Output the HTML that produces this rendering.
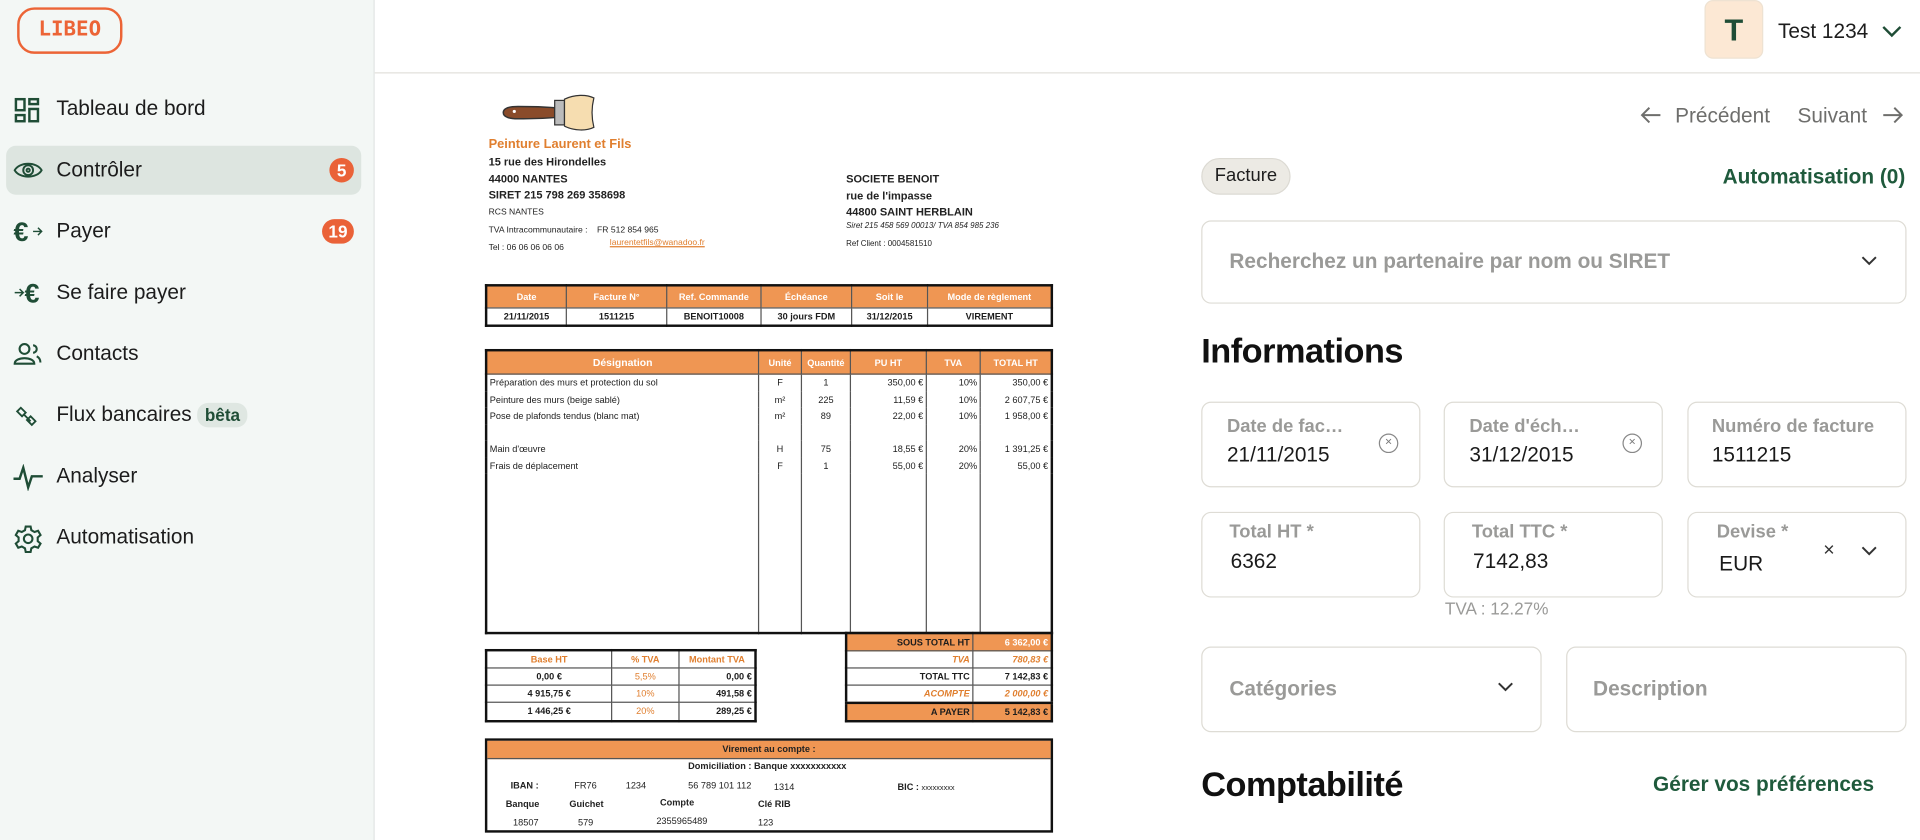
<!DOCTYPE html>
<html><head><meta charset="utf-8"><style>
html,body{margin:0;padding:0;width:1920px;height:840px;overflow:hidden;background:#fff}
#w{position:absolute;left:0;top:0;width:1568px;height:686px;transform:scale(1.22449);transform-origin:0 0;font-family:"Liberation Sans",sans-serif;color:#1d1d1d}
.a{position:absolute}
.sb{left:0;top:0;width:305px;height:686px;background:#f3f7f5;border-right:1px solid #e3e6e4}
.nav{position:absolute;left:46px;font-size:17px;line-height:20px;color:#1c1c1c}
.ic{position:absolute;left:11px}
.badge{position:absolute;background:#ea6238;color:#fff;font-size:14px;font-weight:bold;text-align:center;line-height:20px;height:20px;border-radius:10px}
.box{position:absolute;border:1px solid #dedcd5;border-radius:8px;background:#fff}
.lbl{position:absolute;font-size:15px;font-weight:bold;color:#9a9a98;white-space:nowrap}
.val{position:absolute;font-size:17px;color:#1a1a1a}
.ph{position:absolute;font-size:17px;font-weight:bold;color:#9a9a98}
.h{position:absolute;font-size:28px;font-weight:bold;color:#111;letter-spacing:-0.4px}
.inv{font-family:"Liberation Sans",sans-serif;font-size:7.5px;color:#222}
table{border-collapse:collapse;position:absolute}
td{border:1px solid #555;padding:0 2px;font-size:7.5px;height:13px;white-space:nowrap}
.oh td{background:#ef9653;color:#fff;font-weight:bold;text-align:center}
.thick{border:2px solid #111}
.r{text-align:right}.c{text-align:center}
</style></head><body><div id="w">
<div class="a sb"></div>
<div class="a" style="left:14px;top:6px;width:86px;height:38px;border:2.5px solid #ec6436;border-radius:14px;box-sizing:border-box;color:#ec6436;font-family:'DejaVu Sans Mono','Liberation Mono',monospace;font-weight:bold;font-size:17px;text-align:center;line-height:33px;letter-spacing:0px">LIBEO</div>
<div class="a" style="left:5px;top:119px;width:290px;height:40px;background:#dde5e0;border-radius:8px"></div>
<svg class="ic" style="top:79px" width="22" height="22" viewBox="0 0 22 22" fill="none" stroke="#1f4d36" stroke-width="2"><rect x="2" y="2" width="7" height="9"/><rect x="13" y="2" width="7" height="4"/><rect x="2" y="15" width="7" height="5"/><rect x="13" y="10" width="7" height="10"/></svg>
<div class="nav" style="top:79px">Tableau de bord</div>
<svg class="ic" style="top:129px" width="24" height="20" viewBox="0 0 24 20" fill="none" stroke="#1f4d36" stroke-width="1.6"><path d="M1 10C5 3 19 3 23 10C19 17 5 17 1 10Z"/><circle cx="12" cy="10" r="4"/><circle cx="12" cy="10" r="1.3"/></svg>
<div class="nav" style="top:129px">Contrôler</div>
<div class="badge" style="left:269px;top:129px;width:20px">5</div>
<svg class="ic" style="top:178px" width="26" height="22" viewBox="0 0 26 22"><text x="0" y="19" font-family="Liberation Sans" font-weight="bold" font-size="22" fill="#1f4d36">€</text><path d="M16 11h7M20 8l3 3-3 3" fill="none" stroke="#1f4d36" stroke-width="1.2"/></svg>
<div class="nav" style="top:179px">Payer</div>
<div class="badge" style="left:263px;top:179px;width:26px">19</div>
<svg class="ic" style="top:228px" width="28" height="22" viewBox="0 0 28 22"><path d="M1 11h7M5 8l3 3-3 3" fill="none" stroke="#1f4d36" stroke-width="1.2"/><text x="9" y="19" font-family="Liberation Sans" font-weight="bold" font-size="22" fill="#1f4d36">€</text></svg>
<div class="nav" style="top:229px">Se faire payer</div>
<svg class="ic" style="top:279px" width="24" height="20" viewBox="0 0 24 20" fill="none" stroke="#1f4d36" stroke-width="1.7"><circle cx="9" cy="6" r="4"/><path d="M1 18C1 12 17 12 17 18Z"/><path d="M16 3a3 3 0 0 1 0 6M19 12c2 1 3 3 3 5"/></svg>
<div class="nav" style="top:279px">Contacts</div>
<svg class="ic" style="top:330px" width="24" height="20" viewBox="0 0 24 20" fill="none" stroke="#1f4d36" stroke-width="1.5"><path d="M6 3l4 4-3 3-4-4zM14 10l4 4-3 3-4-4zM9 9l5 5"/></svg>
<div class="nav" style="top:329px">Flux bancaires <span style="background:#dfe7e2;color:#1f4d36;font-weight:bold;font-size:14px;padding:2px 6px;border-radius:9px">bêta</span></div>
<svg class="ic" style="top:379px" width="24" height="22" viewBox="0 0 24 22" fill="none" stroke="#1f4d36" stroke-width="2"><path d="M0 12h5l3-9 4 16 3-9h9"/></svg>
<div class="nav" style="top:379px">Analyser</div>
<svg class="ic" style="top:428px" width="24" height="24" viewBox="0 0 24 24" fill="none" stroke="#1f4d36" stroke-width="1.7"><circle cx="12" cy="12" r="3.5"/><path d="M10 2h4l.6 3 2.6 1.5 2.9-1 2 3.4-2.3 2v3l2.3 2-2 3.4-2.9-1-2.6 1.5-.6 3h-4l-.6-3-2.6-1.5-2.9 1-2-3.4 2.3-2v-3l-2.3-2 2-3.4 2.9 1L9.4 5z"/></svg>
<div class="nav" style="top:429px">Automatisation</div>

<div class="a" style="left:306px;top:59px;width:1262px;height:1px;background:#e2e1dc"></div>
<div class="a" style="left:1392px;top:0;width:48px;height:48px;background:#fce8d4;border-radius:7px;border:1px solid #eee2d2;box-sizing:border-box;color:#1f4d36;font-weight:bold;font-size:25px;text-align:center;line-height:48px">T</div>
<div class="a" style="left:1452px;top:16px;font-size:17px">Test 1234</div>
<svg class="a" style="left:1537px;top:21px" width="16" height="10" viewBox="0 0 16 10" fill="none" stroke="#1f4d36" stroke-width="2"><path d="M1 1l7 7 7-7"/></svg>
<svg class="a" style="left:1339px;top:87px" width="18" height="14" viewBox="0 0 18 14" fill="none" stroke="#6e6e6c" stroke-width="1.6"><path d="M17 7H2M8 1L2 7l6 6"/></svg>
<div class="a" style="left:1368px;top:85px;font-size:17px;color:#6e6e6c">Précédent</div>
<div class="a" style="left:1468px;top:85px;font-size:17px;color:#6e6e6c">Suivant</div>
<svg class="a" style="left:1537px;top:87px" width="18" height="14" viewBox="0 0 18 14" fill="none" stroke="#6e6e6c" stroke-width="1.6"><path d="M1 7h15M10 1l6 6-6 6"/></svg>

<div class="a" style="left:981px;top:129px;width:73px;height:30px;box-sizing:border-box;background:#eceae4;border:1px solid #dcdad3;border-radius:15px;font-size:15px;text-align:center;line-height:28px">Facture</div>
<div class="a" style="right:12px;top:135px;font-size:17px;font-weight:bold;color:#1f5a3c">Automatisation (0)</div>
<div class="box" style="left:981px;top:180px;width:574px;height:66px"></div>
<div class="ph" style="left:1004px;top:204px">Recherchez un partenaire par nom ou SIRET</div>
<svg class="a" style="left:1520px;top:209px" width="13" height="8" viewBox="0 0 13 8" fill="none" stroke="#333" stroke-width="1.6"><path d="M1 1l5.5 5.5L12 1"/></svg>
<div class="h" style="left:981px;top:271px">Informations</div>

<div class="box" style="left:981px;top:328px;width:177px;height:68px"></div>
<div class="lbl" style="left:1002px;top:340px">Date de fac…</div><div class="val" style="left:1002px;top:362px">21/11/2015</div>
<div class="a" style="left:1126px;top:354px;width:14px;height:14px;border:1.4px solid #888;border-radius:50%;font-size:10px;color:#777;text-align:center;line-height:13px">×</div>
<div class="box" style="left:1179px;top:328px;width:177px;height:68px"></div>
<div class="lbl" style="left:1200px;top:340px">Date d'éch…</div><div class="val" style="left:1200px;top:362px">31/12/2015</div>
<div class="a" style="left:1325px;top:354px;width:14px;height:14px;border:1.4px solid #888;border-radius:50%;font-size:10px;color:#777;text-align:center;line-height:13px">×</div>
<div class="box" style="left:1378px;top:328px;width:177px;height:68px"></div>
<div class="lbl" style="left:1398px;top:340px">Numéro de facture</div><div class="val" style="left:1398px;top:362px">1511215</div>

<div class="box" style="left:981px;top:418px;width:177px;height:68px"></div>
<div class="lbl" style="left:1004px;top:426px">Total HT *</div><div class="val" style="left:1005px;top:449px">6362</div>
<div class="box" style="left:1179px;top:418px;width:177px;height:68px"></div>
<div class="lbl" style="left:1202px;top:426px">Total TTC *</div><div class="val" style="left:1203px;top:449px">7142,83</div>
<div class="box" style="left:1378px;top:418px;width:177px;height:68px"></div>
<div class="lbl" style="left:1402px;top:426px">Devise *</div><div class="val" style="left:1404px;top:451px">EUR</div>
<div class="a" style="left:1489px;top:441px;font-size:16px;color:#333">×</div>
<svg class="a" style="left:1520px;top:446px" width="13" height="8" viewBox="0 0 13 8" fill="none" stroke="#333" stroke-width="1.6"><path d="M1 1l5.5 5.5L12 1"/></svg>
<div class="a" style="left:1180px;top:489px;font-size:14px;color:#9a9a98">TVA : 12.27%</div>

<div class="box" style="left:981px;top:528px;width:276px;height:68px"></div>
<div class="ph" style="left:1004px;top:553px">Catégories</div>
<svg class="a" style="left:1223px;top:557px" width="13" height="8" viewBox="0 0 13 8" fill="none" stroke="#333" stroke-width="1.6"><path d="M1 1l5.5 5.5L12 1"/></svg>
<div class="box" style="left:1279px;top:528px;width:276px;height:68px"></div>
<div class="ph" style="left:1301px;top:553px">Description</div>
<div class="h" style="left:981px;top:625px">Comptabilité</div>
<div class="a" style="left:1350px;top:631px;font-size:17px;font-weight:bold;color:#1f5a3c">Gérer vos préférences</div>

<!-- invoice -->
<svg class="a" style="left:409px;top:76px" width="78" height="32" viewBox="0 0 78 32"><path d="M2 16c0-4 6-5 12-5 8 0 18 0 30 1v8c-12 1-22 1-30 1-6 0-12-1-12-5z" fill="#8a4b2a" stroke="#333" stroke-width="1.2"/><circle cx="11" cy="15" r="1.3" fill="#fff"/><rect x="44" y="6" width="8" height="20" fill="#bbb" stroke="#333"/><path d="M52 5c8-4 18-4 24-1-2 8-2 16 0 24-6 3-16 3-24-1z" fill="#f6ddb0" stroke="#333"/></svg>
<div class="a inv" style="left:399px;top:112px;font-size:10.5px;font-weight:bold;color:#e07f2f">Peinture Laurent et Fils</div>
<div class="a inv" style="left:399px;top:126px;font-size:9px;font-weight:bold;line-height:13.5px">15 rue des Hirondelles<br>44000 NANTES<br>SIRET 215 798 269 358698</div>
<div class="a inv" style="left:399px;top:167px;font-size:7px;line-height:14.5px">RCS NANTES<br>TVA Intracommunautaire :&nbsp;&nbsp;&nbsp;&nbsp;FR 512 854 965<br>Tel : 06 06 06 06 06</div>
<div class="a inv" style="left:498px;top:195px;font-size:7px;color:#e07f2f;text-decoration:underline">laurentetfils@wanadoo.fr</div>
<div class="a inv" style="left:691px;top:140px;font-size:9px;font-weight:bold;line-height:13.7px">SOCIETE BENOIT<br>rue de l'impasse<br>44800 SAINT HERBLAIN</div>
<div class="a inv" style="left:691px;top:181px;font-size:6.5px;font-style:italic">Siret 215 458 569 00013/ TVA 854 985 236</div>
<div class="a inv" style="left:691px;top:196px;font-size:6.5px">Ref Client : 0004581510</div>

<table class="thick" style="left:396px;top:232px;width:464px">
<tr class="oh" style="height:18px"><td style="width:60px">Date</td><td style="width:77px">Facture N°</td><td style="width:72px">Ref. Commande</td><td style="width:69px">Échéance</td><td style="width:57px">Soit le</td><td>Mode de règlement</td></tr>
<tr style="font-weight:bold"><td class="c" style="font-weight:bold">21/11/2015</td><td class="c" style="font-weight:bold">1511215</td><td class="c" style="font-weight:bold">BENOIT10008</td><td class="c" style="font-weight:bold">30 jours FDM</td><td class="c" style="font-weight:bold">31/12/2015</td><td class="c" style="font-weight:bold">VIREMENT</td></tr>
</table>

<table class="thick" style="left:396px;top:285px;width:464px;height:233px">
<tr class="oh" style="height:19px"><td style="width:217px;font-size:8.5px">Désignation</td><td style="width:30px">Unité</td><td style="width:35px">Quantité</td><td style="width:57px">PU HT</td><td style="width:39px">TVA</td><td>TOTAL HT</td></tr>
<tr><td style="border-bottom:0">Préparation des murs et protection du sol</td><td class="c" style="border-bottom:0">F</td><td class="c" style="border-bottom:0">1</td><td class="r" style="border-bottom:0">350,00 €</td><td class="r" style="border-bottom:0">10%</td><td class="r" style="border-bottom:0">350,00 €</td></tr>
<tr><td style="border-width:0 1px">Peinture des murs (beige sablé)</td><td class="c" style="border-width:0 1px">m²</td><td class="c" style="border-width:0 1px">225</td><td class="r" style="border-width:0 1px">11,59 €</td><td class="r" style="border-width:0 1px">10%</td><td class="r" style="border-width:0 1px">2 607,75 €</td></tr>
<tr><td style="border-width:0 1px">Pose de plafonds tendus (blanc mat)</td><td class="c" style="border-width:0 1px">m²</td><td class="c" style="border-width:0 1px">89</td><td class="r" style="border-width:0 1px">22,00 €</td><td class="r" style="border-width:0 1px">10%</td><td class="r" style="border-width:0 1px">1 958,00 €</td></tr>
<tr><td style="border-width:0 1px"></td><td style="border-width:0 1px"></td><td style="border-width:0 1px"></td><td style="border-width:0 1px"></td><td style="border-width:0 1px"></td><td style="border-width:0 1px"></td></tr>
<tr><td style="border-width:0 1px">Main d'œuvre</td><td class="c" style="border-width:0 1px">H</td><td class="c" style="border-width:0 1px">75</td><td class="r" style="border-width:0 1px">18,55 €</td><td class="r" style="border-width:0 1px">20%</td><td class="r" style="border-width:0 1px">1 391,25 €</td></tr>
<tr><td style="border-width:0 1px">Frais de déplacement</td><td class="c" style="border-width:0 1px">F</td><td class="c" style="border-width:0 1px">1</td><td class="r" style="border-width:0 1px">55,00 €</td><td class="r" style="border-width:0 1px">20%</td><td class="r" style="border-width:0 1px">55,00 €</td></tr>
<tr style="height:125px"><td style="border-width:0 1px"></td><td style="border-width:0 1px"></td><td style="border-width:0 1px"></td><td style="border-width:0 1px"></td><td style="border-width:0 1px"></td><td style="border-width:0 1px"></td></tr>
</table>

<table class="thick" style="left:690px;top:516px;width:170px;font-weight:bold">
<tr><td class="r" style="background:#ef9653;width:98px;font-weight:bold">SOUS TOTAL HT</td><td class="r" style="background:#ef9653;color:#fff">6 362,00 €</td></tr>
<tr><td class="r" style="color:#e07f2f;font-style:italic">TVA</td><td class="r" style="color:#e07f2f;font-style:italic">780,83 €</td></tr>
<tr><td class="r">TOTAL TTC</td><td class="r" style="font-weight:bold">7 142,83 €</td></tr>
<tr><td class="r" style="color:#e07f2f;font-style:italic">ACOMPTE</td><td class="r" style="color:#e07f2f;font-style:italic;font-weight:bold">2 000,00 €</td></tr>
<tr style="height:15px"><td class="r" style="background:#ef9653;border-top:2px solid #111">A PAYER</td><td class="r" style="background:#ef9653;border-top:2px solid #111;font-weight:bold">5 142,83 €</td></tr>
</table>

<table class="thick" style="left:396px;top:530px;width:222px">
<tr style="color:#e07f2f;font-weight:bold"><td class="c" style="width:97px">Base HT</td><td class="c" style="width:50px">% TVA</td><td class="c">Montant TVA</td></tr>
<tr><td class="c" style="font-weight:bold">0,00 €</td><td class="c" style="color:#e07f2f">5,5%</td><td class="r" style="font-weight:bold">0,00 €</td></tr>
<tr><td class="c" style="font-weight:bold">4 915,75 €</td><td class="c" style="color:#e07f2f">10%</td><td class="r" style="font-weight:bold">491,58 €</td></tr>
<tr style="height:15px"><td class="c" style="font-weight:bold">1 446,25 €</td><td class="c" style="color:#e07f2f">20%</td><td class="r" style="font-weight:bold">289,25 €</td></tr>
</table>

<div class="a" style="left:396px;top:603px;width:464px;height:77px;border:2px solid #111;box-sizing:border-box"></div>
<div class="a inv" style="left:398px;top:605px;width:460px;height:14px;background:#ef9653;text-align:center;font-weight:bold;line-height:14px;border-bottom:1px solid #555">Virement au compte :</div>
<div class="a inv" style="left:562px;top:621px;font-weight:bold">Domiciliation : Banque xxxxxxxxxxx</div>
<div class="a inv" style="left:417px;top:637px;font-weight:bold">IBAN :</div>
<div class="a inv" style="left:469px;top:637px">FR76</div>
<div class="a inv" style="left:511px;top:637px">1234</div>
<div class="a inv" style="left:562px;top:637px">56 789 101 112</div>
<div class="a inv" style="left:632px;top:638px">1314</div>
<div class="a inv" style="left:733px;top:638px;font-weight:bold">BIC : <span style="font-weight:normal;font-size:6px">xxxxxxxxx</span></div>
<div class="a inv" style="left:413px;top:652px;font-weight:bold">Banque</div>
<div class="a inv" style="left:465px;top:652px;font-weight:bold">Guichet</div>
<div class="a inv" style="left:539px;top:651px;font-weight:bold">Compte</div>
<div class="a inv" style="left:619px;top:652px;font-weight:bold">Clé RIB</div>
<div class="a inv" style="left:419px;top:667px">18507</div>
<div class="a inv" style="left:472px;top:667px">579</div>
<div class="a inv" style="left:536px;top:666px">2355965489</div>
<div class="a inv" style="left:619px;top:667px">123</div>
</div></body></html>
